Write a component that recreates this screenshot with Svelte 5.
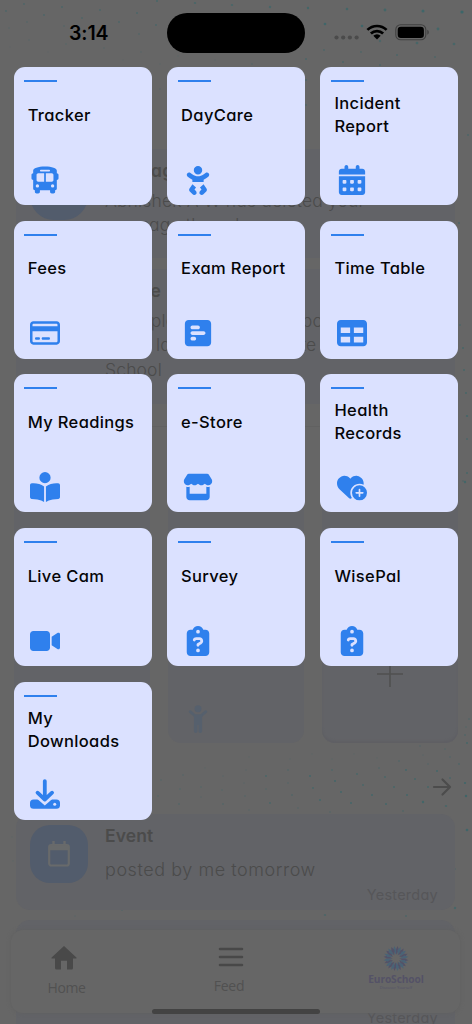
<script>
  const tiles = [
    { title: 'Tracker', icon: 'bus' },
    { title: 'DayCare', icon: 'baby' },
    { title: 'Incident Report', icon: 'calendar' },
    { title: 'Fees', icon: 'card' },
    { title: 'Exam Report', icon: 'poll' },
    { title: 'Time Table', icon: 'table' },
    { title: 'My Readings', icon: 'reader' },
    { title: 'e-Store', icon: 'store' },
    { title: 'Health Records', icon: 'heart' },
    { title: 'Live Cam', icon: 'video' },
    { title: 'Survey', icon: 'question' },
    { title: 'WisePal', icon: 'question' },
    { title: 'My Downloads', icon: 'download' }
  ];

  const icons = {
    bus: ['-28 -28 568 568', 'M256 0C390.4 0 480 35.2 480 80V96l0 32c17.7 0 32 14.3 32 32v64c0 17.7-14.3 32-32 32l0 160c0 17.7-14.3 32-32 32v32c0 17.7-14.3 32-32 32H384c-17.7 0-32-14.3-32-32V448H160v32c0 17.7-14.3 32-32 32l-32 0c-17.7 0-32-14.3-32-32l0-32c-17.7 0-32-14.3-32-32l0-160c-17.7 0-32-14.3-32-32V160c0-17.7 14.3-32 32-32h0V96h0V80C32 35.2 121.6 0 256 0zM96 160v96c0 17.7 14.3 32 32 32H240V128H128c-17.7 0-32 14.3-32 32zM272 288H384c17.7 0 32-14.3 32-32V160c0-17.7-14.3-32-32-32H272V288zM112 400a32 32 0 1 0 0-64 32 32 0 1 0 0 64zm288 0a32 32 0 1 0 0-64 32 32 0 1 0 0 64zM352 80c0-8.8-7.2-16-16-16H176c-8.8 0-16 7.2-16 16s7.2 16 16 16H336c8.8 0 16-7.2 16-16z'],
    baby: ['0 0 448 512', 'M152 88a72 72 0 1 1 144 0A72 72 0 1 1 152 88zM39.7 144.5c13-17.9 38-21.8 55.9-8.8L131.8 162c26.8 19.5 59.1 30 92.2 30s65.4-10.5 92.2-30l36.2-26.4c17.9-13 42.9-9 55.9 8.8s9 42.9-8.8 55.9l-36.2 26.4c-13.6 9.9-28.1 18.2-43.3 25V288H128V251.7c-15.2-6.7-29.7-15.1-43.3-25L48.5 200.3c-17.9-13-21.8-38-8.8-55.9zm89.8 184.8l60.6 53-26 37.2 24.3 24.3c15.6 15.6 15.6 40.9 0 56.6s-40.9 15.6-56.6 0l-48-48C70 438.6 68.1 417 79.2 401.1l50.2-71.8zm128.5 53l60.6-53 50.2 71.8c11.1 15.9 9.2 37.5-4.5 51.2l-48 48c-15.6 15.6-40.9 15.6-56.6 0s-15.6-40.9 0-56.6L284 419.5l-26-37.2z'],
    calendar: ['0 0 448 512', 'M128 0c17.7 0 32 14.3 32 32V64H288V32c0-17.7 14.3-32 32-32s32 14.3 32 32V64h48c26.5 0 48 21.5 48 48v48H0V112C0 85.5 21.5 64 48 64H96V32c0-17.7 14.3-32 32-32zM0 192H448V464c0 26.5-21.5 48-48 48H48c-26.5 0-48-21.5-48-48V192zm64 80v32c0 8.8 7.2 16 16 16h32c8.8 0 16-7.2 16-16V272c0-8.8-7.2-16-16-16H80c-8.8 0-16 7.2-16 16zm128 0v32c0 8.8 7.2 16 16 16h32c8.8 0 16-7.2 16-16V272c0-8.8-7.2-16-16-16H208c-8.8 0-16 7.2-16 16zm144-16c-8.8 0-16 7.2-16 16v32c0 8.8 7.2 16 16 16h32c8.8 0 16-7.2 16-16V272c0-8.8-7.2-16-16-16H336zM64 400v32c0 8.8 7.2 16 16 16h32c8.8 0 16-7.2 16-16V400c0-8.8-7.2-16-16-16H80c-8.8 0-16 7.2-16 16zm144-16c-8.8 0-16 7.2-16 16v32c0 8.8 7.2 16 16 16h32c8.8 0 16-7.2 16-16V400c0-8.8-7.2-16-16-16H208zm112 16v32c0 8.8 7.2 16 16 16h32c8.8 0 16-7.2 16-16V400c0-8.8-7.2-16-16-16H336c-8.8 0-16 7.2-16 16z'],
    card: ['0 0 576 512', 'M512 80c8.8 0 16 7.2 16 16v32H48V96c0-8.8 7.2-16 16-16H512zm16 144V416c0 8.8-7.2 16-16 16H64c-8.8 0-16-7.2-16-16V224H528zM64 32C28.7 32 0 60.7 0 96V416c0 35.3 28.7 64 64 64H512c35.3 0 64-28.7 64-64V96c0-35.3-28.7-64-64-64H64zm56 304c-13.3 0-24 10.7-24 24s10.7 24 24 24h48c13.3 0 24-10.7 24-24s-10.7-24-24-24H120zm128 0c-13.3 0-24 10.7-24 24s10.7 24 24 24H360c13.3 0 24-10.7 24-24s-10.7-24-24-24H248z'],
    poll: ['0 0 448 512', 'M448 96c0-35.3-28.7-64-64-64H64C28.7 32 0 60.7 0 96V416c0 35.3 28.7 64 64 64H384c35.3 0 64-28.7 64-64V96zM256 160c0 17.7-14.3 32-32 32l-96 0c-17.7 0-32-14.3-32-32s14.3-32 32-32l96 0c17.7 0 32 14.3 32 32zm64 64c17.7 0 32 14.3 32 32s-14.3 32-32 32l-192 0c-17.7 0-32-14.3-32-32s14.3-32 32-32l192 0zM192 352c0 17.7-14.3 32-32 32l-32 0c-17.7 0-32-14.3-32-32s14.3-32 32-32l32 0c17.7 0 32 14.3 32 32z'],
    table: ['0 0 512 512', 'M64 256V160H224v96H64zm0 64H224v96H64V320zm224 96V320H448v96H288zM448 256H288V160H448v96zM64 32C28.7 32 0 60.7 0 96V416c0 35.3 28.7 64 64 64H448c35.3 0 64-28.7 64-64V96c0-35.3-28.7-64-64-64H64z'],
    reader: ['0 0 512 512', 'M160 96a96 96 0 1 1 192 0A96 96 0 1 1 160 96zm80 152V512l-48.4-24.2c-20.9-10.4-43.5-17-66.8-19.3l-96-9.6C12.5 457.2 0 443.5 0 427V224c0-17.7 14.3-32 32-32H62.3c63.6 0 125.6 19.6 177.7 56zm32 264V248c52.1-36.4 114.1-56 177.7-56H480c17.7 0 32 14.3 32 32V427c0 16.4-12.5 30.2-28.8 31.8l-96 9.6c-23.2 2.3-45.9 8.9-66.8 19.3L272 512z'],
    store: ['0 0 576 512', 'M547.6 103.8L490.3 13.1C485.2 5 476.1 0 466.4 0H109.6C99.9 0 90.8 5 85.7 13.1L28.3 103.8c-29.6 46.8-3.4 111.9 51.9 119.4c4 .5 8.1 .8 12.1 .8c26.1 0 49.3-11.4 65.2-29c15.9 17.6 39.1 29 65.2 29c26.1 0 49.3-11.4 65.2-29c15.9 17.6 39.1 29 65.2 29c26.2 0 49.3-11.4 65.2-29c16 17.6 39.1 29 65.2 29c4.1 0 8.1-.3 12.1-.8c55.5-7.4 81.8-72.5 52.1-119.4zM499.7 254.9l-.1 0c-5.3 .7-10.7 1.1-16.2 1.1c-12.4 0-24.3-1.9-35.4-5.3V384H128V250.6c-11.2 3.5-23.2 5.4-35.6 5.4c-5.5 0-11-.4-16.3-1.1l-.1 0c-4.1-.6-8.1-1.3-12-2.3V384v64c0 35.3 28.7 64 64 64H448c35.3 0 64-28.7 64-64V384 252.6c-4 1-8 1.8-12.3 2.3z'],
    heart: ['0 0 576 512', 'M47.6 300.4L228.3 469.1c7.5 7 17.4 10.9 27.7 10.9s20.2-3.9 27.7-10.9l2.6-2.4C267.2 438.6 256 404.6 256 368c0-97.2 78.8-176 176-176c28.3 0 55 6.7 78.7 18.5c.9-6.5 1.3-13 1.3-19.6v-5.8c0-69.9-50.5-129.5-119.4-141C347 36.5 300.6 51.4 268 84L256 96 244 84c-32.6-32.6-79-47.5-124.6-39.9C50.5 55.6 0 115.2 0 185.1v5.8c0 41.5 17.2 81.2 47.6 109.5zM432 512a144 144 0 1 0 0-288 144 144 0 1 0 0 288zm16-208v48h48c8.8 0 16 7.2 16 16s-7.2 16-16 16H448v48c0 8.8-7.2 16-16 16s-16-7.2-16-16V384H368c-8.8 0-16-7.2-16-16s7.2-16 16-16h48V304c0-8.8 7.2-16 16-16s16 7.2 16 16z'],
    video: ['0 0 576 512', 'M0 128C0 92.7 28.7 64 64 64H320c35.3 0 64 28.7 64 64V384c0 35.3-28.7 64-64 64H64c-35.3 0-64-28.7-64-64V128zM559.1 99.8c10.4 5.6 16.9 16.4 16.9 28.2V384c0 11.8-6.5 22.6-16.9 28.2s-23 5-32.9-1.6l-96-64L416 337.1V320 192 174.9l14.2-9.5 96-64c9.8-6.5 22.4-7.2 32.9-1.6z'],
    question: ['0 0 384 512', 'M192 0c-41.8 0-77.4 26.7-90.5 64H64C28.7 64 0 92.7 0 128V448c0 35.3 28.7 64 64 64H320c35.3 0 64-28.7 64-64V128c0-35.3-28.7-64-64-64H282.5C269.4 26.7 233.8 0 192 0zm0 64a32 32 0 1 1 0 64 32 32 0 1 1 0-64zM105.8 229.3c7.9-22.3 29.1-37.3 52.8-37.3h58.3c34.9 0 63.1 28.3 63.1 63.1c0 22.6-12.1 43.5-31.7 54.8L216 328.4c-.2 13-10.9 23.6-24 23.6c-13.3 0-24-10.7-24-24V314.5c0-8.6 4.6-16.5 12.1-20.8l44.3-25.4c4.7-2.7 7.6-7.7 7.6-13.1c0-8.4-6.8-15.1-15.1-15.1H158.6c-3.4 0-6.4 2.1-7.5 5.3l-.4 1.2c-4.4 12.5-18.2 19-30.6 14.6s-19-18.2-14.6-30.6l.4-1.2zM160 416a32 32 0 1 1 64 0 32 32 0 1 1 -64 0z']
  };

  // Speckle of the wallpaper: x, y, radius, opacity
  const specks = [
    [6,11,.9,.6],[24,4,.9,.6],[62,7,1,.6],[100,10,1,.6],[137,13,1,.6],[157,1,1,.7],[195,3,1.1,.7],[232,5,1.1,.7],[270,7,1.2,.7],[308,8,1.2,.8],[347,9,1.3,.8],[385,10,1.4,.8],[423,11,1.5,.9],[462,12,1.6,1],
    [44,15,.9,.6],[82,18,.9,.5],[119,22,.9,.6],[156,25,1,.6],[27,22,.8,.5],[9,28,.7,.4],[64,26,.8,.5],[101,30,.8,.5],[139,34,.8,.6],[29,40,.7,.4],[66,44,.8,.4],[10,47,.5,.3],[104,48,.7,.4],[141,52,.7,.4],[48,52,.5,.3],[123,60,.6,.3],[160,64,.6,.4],[178,56,.6,.4],[215,60,.6,.4],[252,64,.7,.5],
    [325,24,1.3,.9],[362,26,1.3,.9],[438,29,1.4,.8],[454,44,1.3,.7],[417,43,1.3,.7],[380,41,1.2,.6],[343,38,1.2,.8],[324,50,.9,.6],[361,52,.9,.5],[397,55,1,.6],[435,57,1,.5],[306,59,1,.6],[343,62,1,.6],[380,65,1,.5],[306,80,1,.5],[306,105,.9,.5],[160,89,.7,.4],[468,135,1,.6],
    [459,223,1,.6],[460,325,1,.5],[463,348,1,.7],[464,370,1,.7],[466,393,1,.7],[467,416,1.1,.8],[467,439,1,.6],[467,473,1,.7],[465,482,1.2,.8],[463,481,.8,.6],
    [469,719,.8,.6],[466,727,.7,.6],[465,735,.8,.7],[467,743,.9,.8],[420,746,.7,.5],[445,749,.7,.6],[423,755,.6,.5],[450,757,.8,.5],[312,754,.5,.4],[354,754,.5,.4],[399,761,.8,.6],[377,758,.5,.4],[459,764,.9,.5],[428,764,.7,.5],[332,759,.6,.4],[290,759,.6,.4],[249,757,.5,.4],[379,768,.8,.6],[332,770,.8,.8],[288,770,.8,.6],[246,770,.6,.5],[406,770,1,.8],[437,771,1,.8],[450,778,1,.6],[357,774,.9,.7],[310,776,1,.8],[266,776,.9,.7],[385,777,.9,.7],[335,781,.9,.9],[288,783,.7,.5],[244,783,.6,.5],[415,779,1,.7],[394,787,1,.7],[363,785,.9,.7],[313,788,.9,.7],[266,789,.7,.6],[465,783,1.1,.9],[466,796,1.2,.9],[428,787,1,.7],[407,795,1,.8],[372,795,1,.8],[341,792,1,.8],[292,795,.8,.7],[245,796,.7,.5],[446,806,1.1,.7],[423,802,1.2,.8],[386,804,1,.8],[351,803,1,.8],[320,800,1,.8],[270,803,.9,.7],[298,808,.7,.5],[249,810,.7,.4],
    [223,776,.6,.5],[205,768,.5,.4],[183,775,.7,.5],[161,780,.7,.5],[201,787,.7,.6],[180,789,.7,.6],[158,796,.7,.6],[222,790,.7,.6],[201,797,.6,.5],[179,804,.8,.6],[223,804,.8,.6],
    [467,830,1.3,.9],[403,811,.8,.7],[330,812,.8,.5],[455,869,.8,.6],[455,908,1.2,.7],[122,910,.8,.6],[75,916,.6,.5],[249,909,.6,.4],[325,915,1.1,.6],[406,916,1,.5],[12,837,.5,.4],[13,861,.5,.4]
  ];
  const petals = Array.from({ length: 12 }, (_, i) => i * 30);
</script>

<main class="phone">
  <svg class="specks" viewBox="0 0 472 1024" aria-hidden="true">
    {#each specks as [x, y, r, o]}
      <circle cx={x} cy={y} {r} opacity={o} />
    {/each}
  </svg>

  <div class="page">
    <article class="post first">
      <div class="avatar"></div>
      <div class="copy"><h3>Message</h3><p>Abhishek A W has deleted your<br />message thread</p></div>
    </article>
    <article class="post second">
      <div class="avatar"></div>
      <div class="copy"><h3>Notice</h3><p>Example of a new form post<br />in the last day for the late<br />School</p></div>
    </article>
    <div class="rule"></div>
    <div class="under">
      {#each [0, 1, 2, 3, 4, 5] as n}
        <div class="shade" class:add={n === 5}>
          {#if n === 4}
            <svg class="child" viewBox="0 0 20 30"><circle cx="10" cy="4.800" r="3.500" /><path d="M2.200 7.700 7.200 12h5.600l5-4.300" fill="none" stroke="#56606d" stroke-width="2.900" stroke-linecap="round" stroke-linejoin="round" /><path d="M5.900 10.600h8.200v16.600a1.800 1.800 0 0 1-3.600 0V21h-1v6.200a1.800 1.800 0 0 1-3.600 0z" /></svg>
          {:else if n === 5}
            <svg class="plus" viewBox="0 0 28 28"><path d="M14 1v26M1 14h26" /></svg>
          {/if}
        </div>
      {/each}
    </div>
    <div class="more">
      <svg viewBox="0 0 20 20"><path d="M2 10h16M10.500 2.500 18 10l-7.500 7.500" /></svg>
    </div>
    <article class="post event">
      <div class="avatar">
        <svg viewBox="0 0 24 28"><path d="M6.500 1v5M17.500 1v5" stroke-width="2.400" /><rect x="2.200" y="5" width="19.600" height="20.500" rx="2" fill="none" stroke-width="2.200" /><path d="M2.500 8h19" stroke-width="4.500" /></svg>
      </div>
      <div class="copy"><h3>Event</h3><p>posted by me tomorrow</p><time>Yesterday</time></div>
    </article>
    <article class="post last"><time>Yesterday</time></article>
  </div>

  <nav class="tabs">
    <div class="tab home">
      <svg viewBox="0 0 26 26"><path d="M13 1 .6 12.500q-.6.900.3 1.100H4V23q0 1.500 1.500 1.500H10v-8.700h6v8.700h4.500q1.500 0 1.500-1.500v-9.400h3.100q.9-.2.3-1.100z" /></svg>
      <span>Home</span>
    </div>
    <div class="tab feed">
      <svg viewBox="0 0 26 22"><path d="M2 3h22M2 11h22M2 19h22" /></svg>
      <span>Feed</span>
    </div>
    <div class="tab brand">
      <svg viewBox="0 0 26 26">
        {#each petals as a}
          <g transform="rotate({a} 13 13)"><path d="M13 9.300 10 4.800 11.300.6 13 3.800z" fill="#4a6376" /><path d="M13 9.300 16 4.800 14.700.6 13 3.800z" fill="#535268" /></g>
        {/each}
      </svg>
      <b>EuroSchool</b>
      <small>Discover Yourself</small>
    </div>
  </nav>
  <div class="indicator"></div>

  <div class="overlay">
    <header class="status">
      <span class="clock">3:14</span>
      <div class="island"></div>
      <div class="signals">
        <svg class="cell" viewBox="0 0 26 5"><circle cx="2.500" cy="2.500" r="2.100" /><circle cx="9.200" cy="2.500" r="2.100" /><circle cx="15.900" cy="2.500" r="2.100" /><circle cx="22.600" cy="2.500" r="2.100" /></svg>
        <svg class="wifi" viewBox="0 0 22 16"><path d="M1.400 5.900a13.800 13.800 0 0 1 19.200 0M4.900 9.500a8.800 8.800 0 0 1 12.200 0" fill="none" stroke="#000" stroke-width="2.700" /><path d="M7.300 11.700a5.300 5.300 0 0 1 7.400 0L11 15.600z" /></svg>
        <svg class="battery" viewBox="0 0 35 17"><rect x=".8" y=".8" width="30" height="15" rx="4.800" fill="none" stroke="#404040" stroke-width="1.100" /><rect x="2.700" y="2.700" width="26.200" height="11.200" rx="3.200" /><path d="M32.300 5.800c2 .8 2 4.200 0 5z" fill="#404040" /></svg>
      </div>
    </header>
    <section class="grid">
      {#each tiles as tile}
        <button class="tile">
          <span class="bar"></span>
          <span class="title">{tile.title}</span>
          {#if tile.icon === 'download'}
            <svg class="icon" viewBox="0 0 30 30"><rect x="0" y="20.500" width="30" height="9.300" rx="3.600" /><path d="m7.500 17.500 7.300 6.300 7.300-6.300" fill="none" stroke="#dbe1ff" stroke-width="4" /><path d="M14.800 2.100v18.400M7.500 13.700l7.300 6.800 7.300-6.800" fill="none" stroke="#2f80ed" stroke-width="3.800" stroke-linecap="round" stroke-linejoin="round" /><circle cx="24.700" cy="25.200" r="1.500" fill="#dbe1ff" /></svg>
          {:else}
            <svg class="icon" viewBox={icons[tile.icon][0]}><path fill-rule="evenodd" d={icons[tile.icon][1]} /></svg>
          {/if}
        </button>
      {/each}
    </section>
  </div>
</main>

<style>
  :global(body) { background: #666; }
  .phone {
    position: relative;
    width: 472px;
    height: 1024px;
    overflow: hidden;
    background: #666;
    font-family: Inter, "Open Sans", sans-serif;
    font-feature-settings: "cv11" 1;
  }
  .specks { position: absolute; inset: 0; width: 472px; height: 1024px; fill: #3c6669; }
  .page {
    position: relative;
    box-sizing: border-box;
    height: 1024px;
    overflow: hidden;
    padding: 149px 17px 0 16px;
    color: #4b4b4b;
  }
  .post {
    display: flex;
    box-sizing: border-box;
    padding: 11px 17px 0 14px;
    border-radius: 14px;
    background: #626367;
  }
  .first { height: 109px; }
  .second { height: 135px; margin-top: 11px; }
  .avatar {
    display: flex;
    flex: none;
    align-items: center;
    justify-content: center;
    width: 58px;
    height: 60px;
    margin-right: 17px;
    border-radius: 24px;
    background: #525c6c;
  }
  .second .avatar { visibility: hidden; }
  .copy { display: flex; flex: 1; flex-direction: column; }
  h3 { margin: 0; font-size: 17.500px; line-height: 22px; font-weight: 600; letter-spacing: .1px; }
  p { margin: 7px 0 0; font-size: 17.500px; line-height: 24.400px; font-weight: 300; letter-spacing: .15px; white-space: nowrap; }
  time { align-self: flex-end; color: #565659; font-size: 14.500px; line-height: 20px; letter-spacing: .25px; }
  .rule { height: 22px; border-bottom: 1px solid #616161; }
  .under {
    display: grid;
    grid-template-columns: repeat(3, 136px);
    grid-auto-rows: 136px;
    gap: 18px;
    margin: 26px -1px 0 -2px;
  }
  .shade { display: flex; align-items: flex-end; box-sizing: border-box; border-radius: 13px; background: #626367; }
  .child { width: 20px; height: 30px; margin: 0 0 9px 20px; fill: #56606d; }
  .add { justify-content: center; box-shadow: inset 0 -2px 2px #5f5f64; }
  .plus { width: 28px; height: 28px; margin-bottom: 55px; stroke: #505050; stroke-width: 1.600; }
  .more { display: flex; align-items: center; justify-content: flex-end; height: 71px; padding: 8px 3px 0 0; box-sizing: border-box; }
  .more svg { width: 20px; height: 20px; margin-top: 8px; fill: none; stroke: #4c4c4c; stroke-width: 2.200; stroke-linecap: round; stroke-linejoin: round; }
  .event { height: 96px; }
  .event .avatar { height: 58px; border-radius: 20px; }
  .event .avatar svg { width: 24px; height: 28px; stroke: #686a6b; }
  .event p { margin-top: 11px; font-size: 18px; letter-spacing: .55px; }
  .event time { margin-top: 3px; }
  .last { height: 120px; margin-top: 10px; justify-content: flex-end; padding-top: 88px; }
  .last time { align-self: flex-start; }
  .tabs {
    position: absolute;
    left: 11px;
    right: 12px;
    top: 930px;
    height: 83px;
    border-radius: 12px;
    background: #666;
    box-shadow: 0 0 4px #606060;
  }
  .tab { position: absolute; display: flex; flex-direction: column; align-items: center; width: 80px; color: #515151; font: 14px "Open Sans", sans-serif; }
  .home { left: 15.500px; top: 15px; }
  .home svg { width: 26px; height: 26px; margin-right: 5px; fill: #494949; }
  .home span { margin-top: 6.500px; line-height: 20px; letter-spacing: -.4px; }
  .feed { left: 178px; top: 16px; }
  .feed svg { width: 26px; height: 22px; margin-left: 4px; stroke: #484848; stroke-width: 2.600; stroke-linecap: round; }
  .feed span { margin-top: 8px; line-height: 20px; letter-spacing: -.3px; }
  .brand { left: 345px; top: 15px; color: #545266; }
  .brand svg { width: 26px; height: 27px; }
  .brand b { font: 700 10.200px/12px "Open Sans", sans-serif; letter-spacing: -.1px; margin-top: 1px; }
  .brand small { font: 4px/4px "Open Sans", sans-serif; margin-top: 1px; }
  .indicator { position: absolute; left: 152px; top: 1009px; width: 168px; height: 5px; border-radius: 3px; background: #434343; }
  .overlay { position: absolute; inset: 0; }
  .status { display: flex; align-items: flex-start; box-sizing: border-box; height: 67px; padding-top: 12.500px; }
  .clock { width: 98px; padding-left: 69px; margin-top: 8px; font-size: 19.500px; line-height: 24px; font-weight: 600; letter-spacing: -.1px; }
  .island { width: 138px; height: 40.500px; border-radius: 21px; background: #000; }
  .signals { display: flex; align-items: center; margin: 11px 0 0 29px; height: 17px; }
  .cell { width: 26px; height: 5px; margin-top: 11px; fill: #4b4b4b; }
  .wifi { width: 22px; height: 16px; margin-left: 6px; }
  .battery { width: 35px; height: 17px; margin-left: 7px; }
  .grid {
    display: grid;
    grid-template-columns: repeat(3, 138px);
    grid-auto-rows: 138px;
    gap: 15.700px 15.400px;
    padding-left: 13.500px;
  }
  .tile {
    display: flex;
    flex-direction: column;
    align-items: flex-start;
    box-sizing: border-box;
    margin: 0;
    padding: 13px 8px 0 10.800px;
    border: 0;
    border-radius: 11px;
    background: #dbe1ff;
    color: #050507;
    font: inherit;
    text-align: left;
  }
  .bar { width: 33px; height: 2px; flex: none; background: #2f80ed; }
  .title {
    display: flex;
    align-items: center;
    height: 46px;
    width: 112px;
    margin: 10px 0 0 3.400px;
    font-size: 16.500px;
    line-height: 23px;
    font-weight: 500;
    letter-spacing: .35px;
  }
  .icon { flex: none; width: 30px; height: 30px; margin: 26.700px 0 0 5.500px; fill: #2f80ed; }
</style>
